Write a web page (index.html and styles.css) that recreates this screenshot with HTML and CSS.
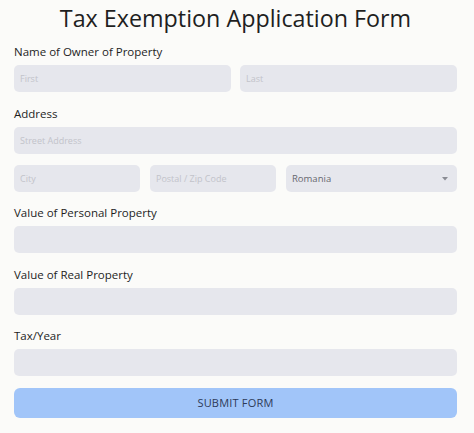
FILE: index.html
```html
<!DOCTYPE html>
<html lang="en">
<head>
<meta charset="utf-8">
<title>Tax Exemption Application Form</title>
<link rel="stylesheet" href="styles.css">
</head>
<body>
<form class="form">
  <h1 class="title">Tax Exemption Application Form</h1>

  <div class="group">
    <label class="label">Name of Owner of Property</label>
    <div class="row-2">
      <input class="field" type="text" placeholder="First">
      <input class="field" type="text" placeholder="Last">
    </div>
  </div>

  <div class="group">
    <label class="label">Address</label>
    <input class="field" type="text" placeholder="Street Address">
    <div class="row-3">
      <input class="field" type="text" placeholder="City">
      <input class="field" type="text" placeholder="Postal / Zip Code">
      <div class="select-wrap">
        <select class="field select">
          <option>Romania</option>
        </select>
        <svg class="caret" width="6" height="4" viewBox="0 0 6 4"><path d="M0 0h6L3 3.5z" fill="#8a8c94"/></svg>
      </div>
    </div>
  </div>

  <div class="group">
    <label class="label">Value of Personal Property</label>
    <input class="field" type="text">
  </div>

  <div class="group">
    <label class="label">Value of Real Property</label>
    <input class="field" type="text">
  </div>

  <div class="group">
    <label class="label">Tax/Year</label>
    <input class="field" type="text">
  </div>

  <button class="submit" type="button">SUBMIT FORM</button>
</form>
</body>
</html>
```

FILE: styles.css
```css
* { box-sizing: border-box; }

html, body {
  margin: 0;
  padding: 0;
  background: #fbfbf9;
}

body {
  font-family: "Open Sans", "Liberation Sans", sans-serif;
  color: #2a2a2a;
}

.form {
  display: flex;
  flex-direction: column;
  padding: 4px 17px 0 14px;
}

.title {
  margin: 0 0 12px;
  font-size: 23.3px;
  line-height: 28px;
  font-weight: 400;
  text-align: center;
  color: #1f1f1f;
}

.group {
  display: flex;
  flex-direction: column;
  margin-bottom: 13.5px;
}

.label {
  display: block;
  font-size: 11.5px;
  line-height: 16px;
  font-weight: 500;
  color: #1e1e1e;
  margin-bottom: 5px;
}

.row-2 {
  display: grid;
  grid-template-columns: 1fr 1fr;
  gap: 9px;
}

.row-3 {
  display: grid;
  grid-template-columns: 126px 126px 1fr;
  gap: 10px;
  margin-top: 11px;
}

.field {
  display: block;
  width: 100%;
  height: 27px;
  border: none;
  border-radius: 5px;
  background: #e6e7ed;
  padding: 0 6px;
  font-family: "Open Sans", "Liberation Sans", sans-serif;
  font-size: 9px;
  color: #5f6068;
  outline: none;
}

.field::placeholder {
  color: #c2c3ca;
}

.select-wrap {
  position: relative;
}

.select {
  appearance: none;
  -webkit-appearance: none;
  color: #67686f;
  font-size: 9.5px;
}

.caret {
  position: absolute;
  right: 9px;
  top: 12px;
}

.submit {
  display: block;
  width: 100%;
  height: 30px;
  margin-top: -2px;
  border: none;
  border-radius: 6px;
  background: #a1c5f9;
  font-family: "Open Sans", "Liberation Sans", sans-serif;
  font-size: 11px;
  font-weight: 500;
  color: #2d3a58;
  letter-spacing: 0.2px;
}
```
